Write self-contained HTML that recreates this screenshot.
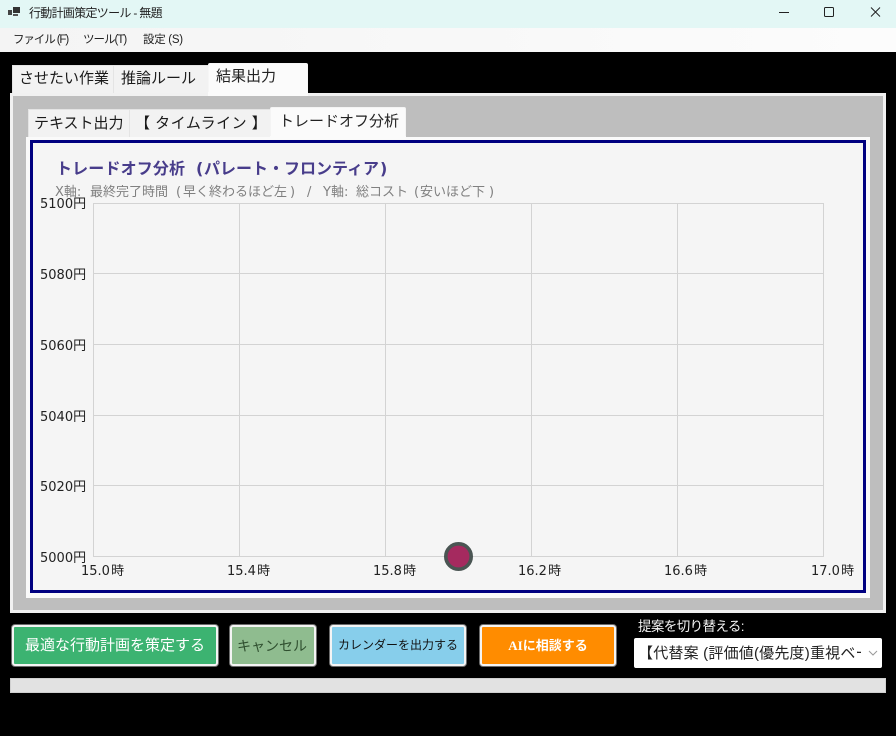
<!DOCTYPE html>
<html lang="ja">
<head>
<meta charset="utf-8">
<title>行動計画策定ツール - 無題</title>
<style>
html,body{margin:0;padding:0;width:896px;height:736px;overflow:hidden;background:#000}
body{position:relative;font-family:"Liberation Sans","Noto Sans CJK JP",sans-serif;color:#1a1a1a}
.a{position:absolute;white-space:nowrap;box-sizing:border-box}
.tab{position:absolute;box-sizing:border-box;background:#f2f2f2;border:1px solid #e4e4e4;border-bottom:none;font-size:15px;line-height:26px;white-space:nowrap}
.tab.on{background:#fbfbfb;border-radius:2px 2px 0 0;color:#222}
.btn{position:absolute;box-sizing:border-box;border:2px solid #f4f4f4;border-radius:3px;text-align:center;white-space:nowrap;box-shadow:0 0 0 1px rgba(240,240,240,.45)}
.t{font-family:"DejaVu Sans","Noto Sans CJK JP",sans-serif;font-size:13px;color:#222;position:absolute;white-space:nowrap;line-height:16px;word-spacing:-3px}
.h{font-family:"DejaVu Sans","Noto Sans CJK JP",sans-serif;font-size:13px;line-height:17px;color:#808080;position:absolute;top:184px;white-space:nowrap}
.g{font-family:"DejaVu Sans","Noto Sans CJK JP",sans-serif;font-size:16px;line-height:20px;font-weight:bold;color:#483d8b;position:absolute;top:159px;white-space:nowrap}
</style>
</head>
<body>
<div class="a" style="left:0;top:0;width:896px;height:28px;background:#e3f7f5"></div>
<svg class="a" style="left:8px;top:6px" width="14" height="12" viewBox="0 0 14 12">
<rect x="0" y="4" width="4" height="5" fill="#444"/><rect x="5" y="1" width="7" height="6" fill="#333"/><rect x="5" y="8" width="5" height="2" fill="#555"/>
</svg>
<div class="a" style="left:29px;top:5px;font-size:12px;line-height:17px;color:#222;letter-spacing:-.7px">行動計画策定ツール - 無題</div>
<svg class="a" style="left:770px;top:0" width="126" height="28" viewBox="0 0 126 28" fill="none" stroke="#222" stroke-width="1">
<path d="M9 12.5H19"/><rect x="54.5" y="7.5" width="9" height="9" rx="1"/><path d="M101 7.5L110 16.5M110 7.5L101 16.5"/>
</svg>

<div class="a" style="left:0;top:28px;width:896px;height:24px;background:linear-gradient(90deg,#f4f4f4,#fcfcfc)"></div>
<div class="a" style="left:13px;top:32px;font-size:11.5px;line-height:16px;color:#222;letter-spacing:-1.1px">ファイル (F)</div>
<div class="a" style="left:83px;top:32px;font-size:11.5px;line-height:16px;color:#222;letter-spacing:-1px">ツール(T)</div>
<div class="a" style="left:143px;top:32px;font-size:11.5px;line-height:16px;color:#222;letter-spacing:-.3px">設定 (S)</div>

<div class="tab" style="left:12px;top:65px;width:102px;height:29px;padding-left:6px">させたい作業</div>
<div class="tab" style="left:113px;top:65px;width:96px;height:29px;padding-left:7px">推論ルール</div>
<div class="tab on" style="left:208px;top:63px;width:100px;height:31px;padding-left:7px;line-height:26px;border-color:#f6f6f6">結果出力</div>

<div class="a" style="left:10px;top:93px;width:876px;height:520px;background:#bebebe;border:3px solid #f1f1f1"></div>
<div class="a" style="left:208px;top:92px;width:100px;height:4px;background:#fbfbfb"></div>

<div class="tab" style="left:28px;top:109px;width:102px;height:29px;padding-left:5px;line-height:27px">テキスト出力</div>
<div class="tab" style="left:129px;top:109px;width:142px;height:29px;padding-left:5px;line-height:27px;letter-spacing:.5px">【 タイムライン 】</div>
<div class="tab on" style="left:270px;top:107px;width:136px;height:31px;padding-left:8px;line-height:27px;border-color:#f4f4f4">トレードオフ分析</div>

<div class="a" style="left:26px;top:137px;width:844px;height:461px;background:#fafafa"></div>
<div class="a" style="left:30px;top:140px;width:836px;height:453px;background:#f5f5f5;border:3px solid #000080"></div>
<div class="a" style="left:270px;top:136px;width:136px;height:3px;background:#fbfbfb"></div>

<div class="g" style="left:56px;letter-spacing:.15px">トレードオフ分析</div>
<div class="g" style="left:196px">(</div>
<div class="g" style="left:204px">パレート・フロンティア</div>
<div class="g" style="left:380px">)</div>

<div class="h" style="left:55px">X軸:</div>
<div class="h" style="left:90px">最終完了時間</div>
<div class="h" style="left:176px">(</div>
<div class="h" style="left:183px">早く終わるほど左</div>
<div class="h" style="left:290px">)</div>
<div class="h" style="left:307px">/</div>
<div class="h" style="left:323px">Y軸:</div>
<div class="h" style="left:356px">総コスト</div>
<div class="h" style="left:414px">(</div>
<div class="h" style="left:420px">安いほど下</div>
<div class="h" style="left:489px">)</div>

<svg class="a" style="left:0;top:0" width="896" height="736" viewBox="0 0 896 736" fill="none">
<path stroke="#d3d3d3" stroke-width="1" d="M93.5 203V557M239.5 203V557M385.5 203V557M531.5 203V557M677.5 203V557M823.5 203V557M93 203.5H824M93 273.5H824M93 344.5H824M93 415.5H824M93 485.5H824M93 556.5H824"/>
<circle cx="458.5" cy="556.5" r="12.7" fill="#a52a5f" stroke="#4a5553" stroke-width="3.6"/>
</svg>

<div class="t" style="left:40px;top:197px">5100円</div>
<div class="t" style="left:40px;top:268px">5080円</div>
<div class="t" style="left:40px;top:339px">5060円</div>
<div class="t" style="left:40px;top:410px">5040円</div>
<div class="t" style="left:40px;top:480px">5020円</div>
<div class="t" style="left:40px;top:551px">5000円</div>
<div class="t" style="left:81px;top:564px">15.0 時</div>
<div class="t" style="left:227px;top:564px">15.4 時</div>
<div class="t" style="left:373px;top:564px">15.8 時</div>
<div class="t" style="left:518px;top:564px">16.2 時</div>
<div class="t" style="left:664px;top:564px">16.6 時</div>
<div class="t" style="left:811px;top:564px">17.0 時</div>

<div class="btn" style="left:12px;top:625px;width:206px;height:41px;background:#3cb371;color:#fff;font-size:15px;line-height:38px">最適な行動計画を策定する</div>
<div class="btn" style="left:230px;top:625px;width:86px;height:41px;background:#8fbc8f;color:#2f4f2f;font-size:14px;line-height:38px;padding-right:2px">キャンセル</div>
<div class="btn" style="left:330px;top:625px;width:136px;height:41px;background:#87ceeb;color:#111;font-size:12px;line-height:37px">カレンダーを出力する</div>
<div class="btn" style="left:480px;top:625px;width:136px;height:41px;background:#ff8c00;color:#fff;font-size:13px;font-weight:bold;line-height:38px;font-family:'Liberation Serif','Noto Sans CJK JP',serif">AIに相談する</div>

<div class="a" style="left:638px;top:617px;font-size:13.5px;line-height:20px;color:#f2f2f2;letter-spacing:-.6px">提案を切り替える:</div>
<div class="a" style="left:634px;top:638px;width:248px;height:30px;background:#fff;border-radius:2px"></div>
<div class="a" style="left:638px;top:642px;width:223px;height:24px;overflow:hidden;font-size:15px;line-height:24px;color:#222;letter-spacing:.2px">【代替案 (評価値(優先度)重視ベース</div>
<svg class="a" style="left:868px;top:649px" width="10" height="8" viewBox="0 0 10 8" fill="none" stroke="#999" stroke-width="1"><path d="M1 2L5 6L9 2"/></svg>

<div class="a" style="left:10px;top:678px;width:876px;height:15px;background:#e2e2e2;border:1px solid #d0d0d0"></div>
</body>
</html>
